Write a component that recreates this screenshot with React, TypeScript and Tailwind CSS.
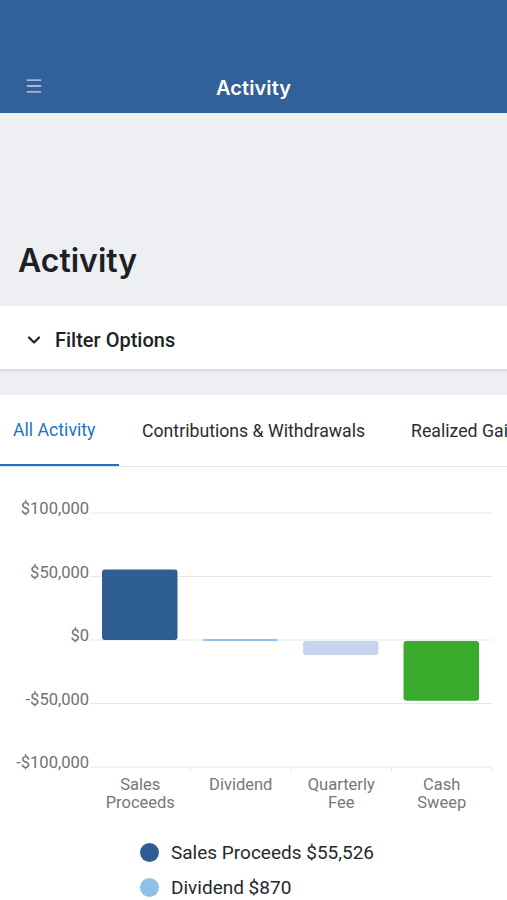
import { ChevronDown, Menu } from 'lucide-react'

const font = { fontFamily: 'Roboto, "Liberation Sans", sans-serif' }

type Bar = { label: string[]; value: number; color: string }

const bars: Bar[] = [
  { label: ['Sales', 'Proceeds'], value: 55526, color: '#2f5e93' },
  { label: ['Dividend'], value: 870, color: '#8fc0e8' },
  { label: ['Quarterly', 'Fee'], value: -11000, color: '#c5d5ec' },
  { label: ['Cash', 'Sweep'], value: -47000, color: '#3aab2c' },
]

const ticks = [100000, 50000, 0, -50000, -100000]

function fmt(v: number) {
  const s = '$' + Math.abs(v).toLocaleString('en-US')
  return v < 0 ? '-' + s : s
}

function Chart() {
  // plot area: x 90..492, zero line 150px below svg top
  const left = 90
  const right = 492
  const zeroY = 150
  const per = 63.5 / 50000
  const colW = (right - left) / 4
  const y = (v: number) => zeroY - v * per

  return (
    <svg width="507" height="330" viewBox="0 0 507 330" className="block">
      {ticks.map((t) => (
        <g key={t}>
          <line x1={left} x2={right} y1={y(t)} y2={y(t)} stroke="#e6e7ea" strokeWidth="1" />
          <text x={89} y={y(t) + 1} textAnchor="end" fontSize="16.5" fill="#6f7177" style={font}>
            {fmt(t)}
          </text>
        </g>
      ))}
      {[1, 2, 3, 4].map((i) => (
        <line
          key={i}
          x1={left + colW * i}
          x2={left + colW * i}
          y1={y(-100000)}
          y2={y(-100000) + 4}
          stroke="#e6e7ea"
        />
      ))}
      {bars.map((b, i) => {
        const x = left + colW * i + 12
        const w = colW - 25
        const top = b.value >= 0 ? y(b.value) : zeroY + 1
        const h = Math.max(Math.abs(b.value) * per, 2)
        return <rect key={i} x={x} y={top} width={w} height={h} rx="3" fill={b.color} />
      })}
      {bars.map((b, i) => (
        <text key={i} textAnchor="middle" fontSize="16.5" fill="#75777c" style={font}>
          {b.label.map((l, j) => (
            <tspan key={j} x={left + colW * i + colW / 2} y={300 + j * 18}>
              {l}
            </tspan>
          ))}
        </text>
      ))}
    </svg>
  )
}

export default function App() {
  return (
    <div className="w-[507px] h-[900px] overflow-hidden bg-white" style={font}>
      <header className="h-[113px] bg-[#31609a] flex items-end">
        <div className="relative w-full h-[50px] flex items-center justify-center">
          <Menu className="absolute left-[24px] top-[13px] w-[20px] h-[20px] text-[#c9d7ea]" strokeWidth={1.6} />
          <span className="text-white text-[20px] font-semibold tracking-[0.1px]" style={{ fontFamily: 'Inter, sans-serif' }}>
            Activity
          </span>
        </div>
      </header>

      <div className="bg-[#eeeff3] h-[193px] flex items-end px-[18px] pb-[29px]">
        <h1 className="text-[32px] font-semibold text-[#1d1f24] leading-none" style={{ fontFamily: 'Inter, sans-serif' }}>
          Activity
        </h1>
      </div>

      <div className="bg-white h-[63px] flex items-center pl-[24px] gap-[11px] shadow-[0_2px_3px_rgba(0,0,0,0.12)] relative pt-[4px]">
        <ChevronDown className="w-[20px] h-[20px] text-[#1f2125]" strokeWidth={2.6} />
        <span className="text-[20px] font-medium text-[#202226]">Filter Options</span>
      </div>

      <div className="bg-[#eeeff3] h-[26px]" />

      <div className="bg-white">
        <div className="flex h-[72px] border-b border-[#e3e4e7] whitespace-nowrap overflow-hidden">
          <div className="w-[119px] shrink-0 flex items-center pl-[13px] border-b-[3px] border-[#1b73c8] -mb-px pt-[2px]">
            <span className="text-[17.7px] text-[#1b73c8]">All Activity</span>
          </div>
          <div className="shrink-0 flex items-center pl-[23px] pr-[46px] pt-[2px]">
            <span className="text-[17.7px] text-[#2a2c30]">Contributions &amp; Withdrawals</span>
          </div>
          <div className="shrink-0 flex items-center pt-[2px]">
            <span className="text-[17.7px] text-[#2a2c30]">Realized Gains</span>
          </div>
        </div>

        <div className="pt-[23px]">
          <Chart />
        </div>

        <div className="flex flex-col items-start pl-[140px] gap-[12px] mt-[21px]">
          <div className="flex items-center gap-[12px]">
            <span className="w-[19px] h-[19px] rounded-full bg-[#2f5e93]" />
            <span className="text-[19px] leading-[23px] text-[#26282c]">Sales Proceeds $55,526</span>
          </div>
          <div className="flex items-center gap-[12px]">
            <span className="w-[19px] h-[19px] rounded-full bg-[#8fc0e8]" />
            <span className="text-[19px] leading-[23px] text-[#26282c]">Dividend $870</span>
          </div>
        </div>
      </div>
    </div>
  )
}
